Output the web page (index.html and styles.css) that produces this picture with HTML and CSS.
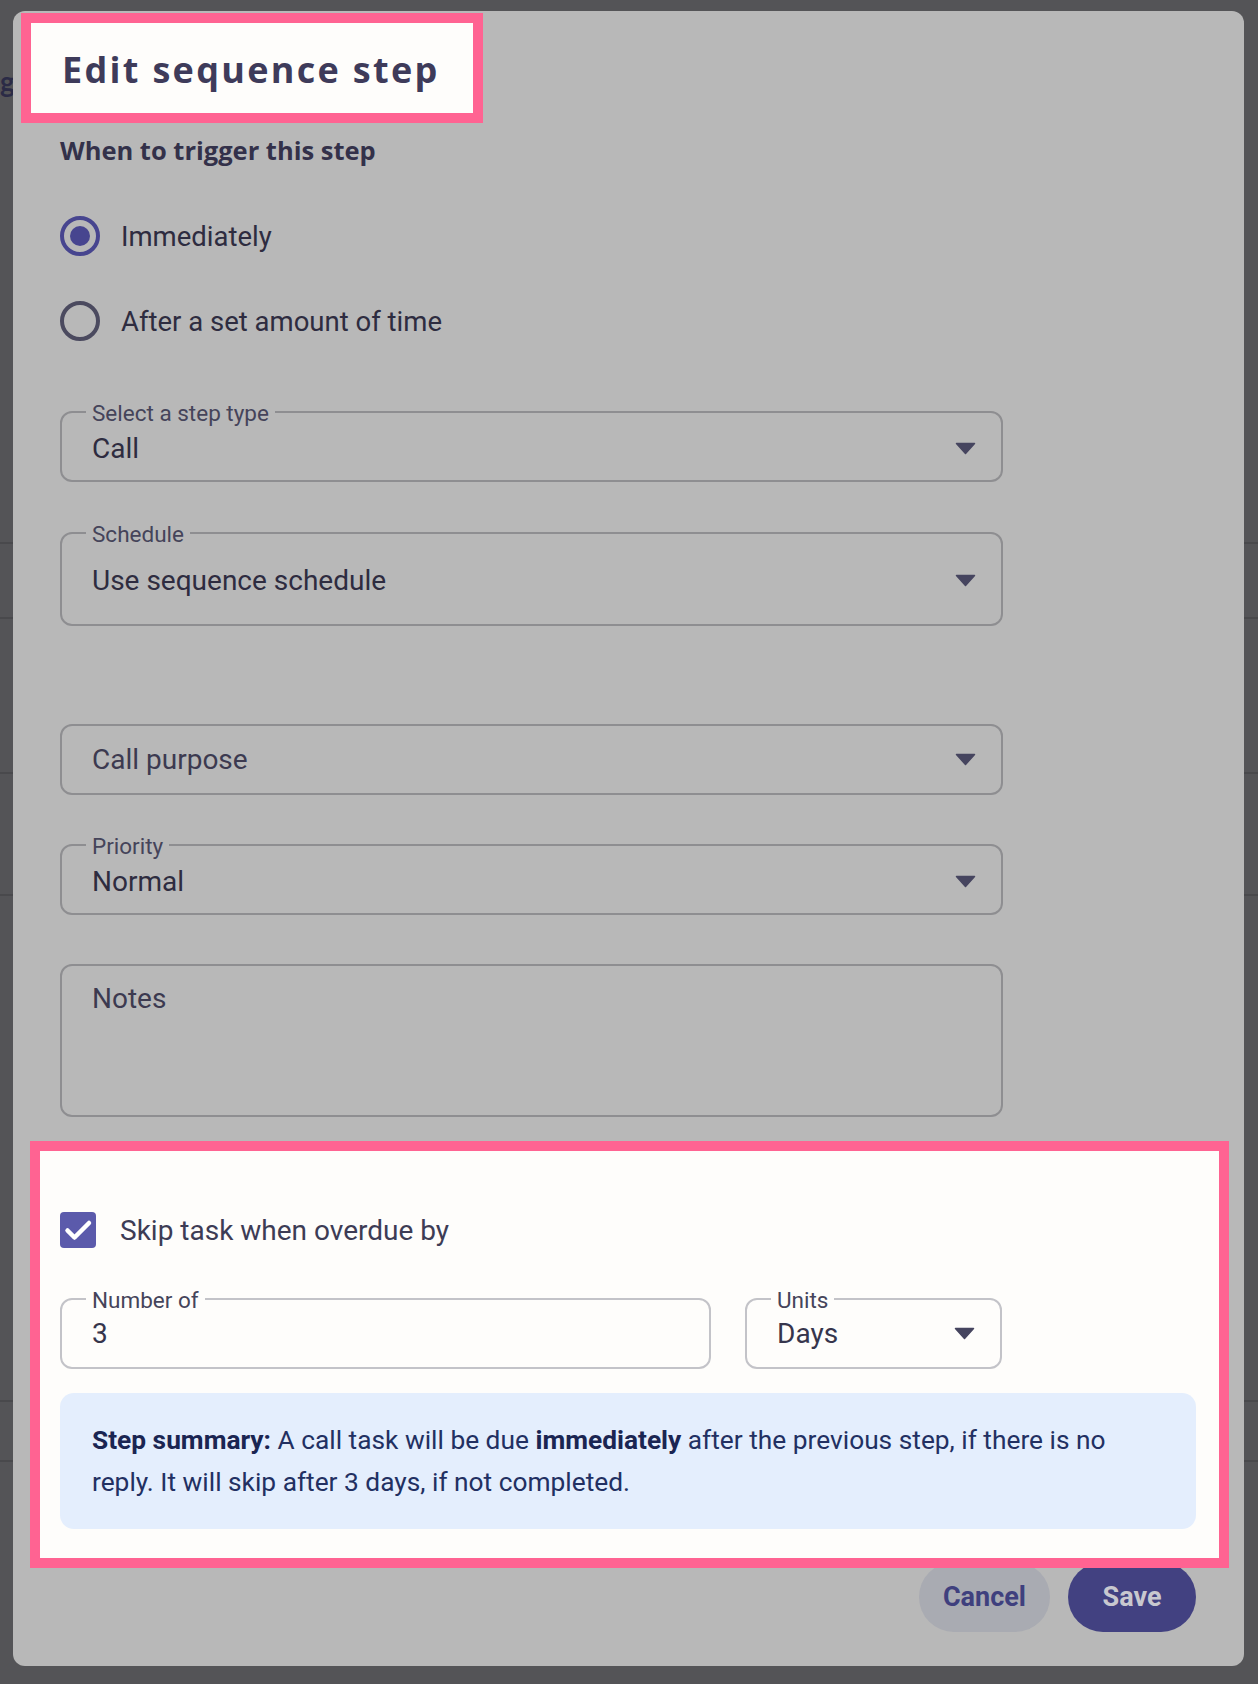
FILE: index.html
```html
<!DOCTYPE html>
<html>
	<head>
		<meta charset="utf-8">
		<title>Edit sequence step</title>
		<link rel="stylesheet" href="styles.css">
	</head>
	<body>
		<div class="page">
			<div class="page-heading">g</div>
			<ul class="page-rows">
				<li class="row-a"></li>
				<li class="row-b"></li>
				<li class="row-c"></li>
				<li class="row-d"></li>
				<li class="row-e"></li>
				<li class="row-f"></li>
			</ul>
		</div>

		<div class="dialog" role="dialog">
			<div class="spotlight spotlight-title">
				<h2 class="dialog-title">Edit sequence step</h2>
			</div>

			<h3 class="section-title">When to trigger this step</h3>

			<div class="radio-group">
				<label class="radio-row"><span class="radio radio-checked"></span>Immediately</label>
				<label class="radio-row"><span class="radio"></span>After a set amount of time</label>
			</div>

			<fieldset class="field field-step">
				<legend>Select a step type</legend>
				<div class="field-value">Call
					<svg class="caret" viewBox="0 0 21 13"><path d="M1.5 1.5 H19.5 L10.5 11.5 Z"/></svg>
				</div>
			</fieldset>

			<fieldset class="field field-schedule">
				<legend>Schedule</legend>
				<div class="field-value field-value-tall">Use sequence schedule
					<svg class="caret" viewBox="0 0 21 13"><path d="M1.5 1.5 H19.5 L10.5 11.5 Z"/></svg>
				</div>
			</fieldset>

			<fieldset class="field field-plain field-purpose">
				<div class="field-value field-value-plain">Call purpose
					<svg class="caret" viewBox="0 0 21 13"><path d="M1.5 1.5 H19.5 L10.5 11.5 Z"/></svg>
				</div>
			</fieldset>

			<fieldset class="field field-priority">
				<legend>Priority</legend>
				<div class="field-value">Normal
					<svg class="caret" viewBox="0 0 21 13"><path d="M1.5 1.5 H19.5 L10.5 11.5 Z"/></svg>
				</div>
			</fieldset>

			<fieldset class="field field-plain field-notes">
				<div class="notes-placeholder">Notes</div>
			</fieldset>

			<div class="spotlight spotlight-skip">
				<label class="check-row">
					<svg class="checkbox" viewBox="0 0 36 36">
						<rect width="36" height="36" rx="4"/>
						<polyline points="7.5,18.5 14.5,25.5 29,11"/>
					</svg>
					Skip task when overdue by
				</label>

				<div class="field-row">
					<fieldset class="field field-light field-number">
						<legend>Number of</legend>
						<div class="field-value">3</div>
					</fieldset>
					<fieldset class="field field-light field-units">
						<legend>Units</legend>
						<div class="field-value">Days
							<svg class="caret" viewBox="0 0 21 13"><path d="M1.5 1.5 H19.5 L10.5 11.5 Z"/></svg>
						</div>
					</fieldset>
				</div>

				<p class="summary"><b>Step summary:</b> A call task will be due <b>immediately</b> after the previous step, if there is no reply. It will skip after 3 days, if not completed.</p>
			</div>

			<div class="dialog-actions">
				<button class="btn btn-cancel">Cancel</button>
				<button class="btn btn-save">Save</button>
			</div>
		</div>
	</body>
</html>
```

FILE: styles.css
```css
* {
	box-sizing: border-box;
}

body {
	margin: 0;
	background: #545457;
	font-family: Roboto, "Liberation Sans", sans-serif;
	color: #2e2c40;
}

/* page behind the modal */
.page-heading {
	padding-top: 65px;
	font: 700 28px/32px Lato, sans-serif;
	color: #2b2b46;
}

.page-rows {
	list-style: none;
	margin: 445px 0 0;
	padding: 0;
}

.page-rows li {
	border-top: 2px solid #49494c;
}

.row-a { height: 75px; }
.row-b { height: 155px; }
.row-c { height: 122px; }
.row-d { height: 506px; }
.row-e { height: 60px; }
.row-f { height: 60px; }

/* modal */
.dialog {
	position: fixed;
	top: 11px;
	left: 13px;
	width: 1231px;
	height: 1655px;
	padding: 2px 48px 33px 47px;
	background: #b8b8b8;
	border-radius: 12px;
}

.spotlight {
	position: relative;
	z-index: 1;
	background: #fefdfb;
	border: 10px solid #ff6392;
}

.spotlight-title {
	width: 462px;
	height: 110px;
	margin-left: -39px;
	padding: 5px 0 0 31px;
}

.dialog-title {
	margin: 0;
	font: 700 36px/84px "Open Sans", sans-serif;
	letter-spacing: 2.3px;
	color: #3e3b5a;
}

.section-title {
	margin: 12px 0 0;
	font: 700 25.5px/30px "Open Sans", sans-serif;
	color: #33314a;
}

.radio-group {
	display: flex;
	flex-direction: column;
	gap: 45px;
	margin-top: 51px;
}

.radio-row {
	display: flex;
	align-items: center;
	gap: 21px;
	height: 40px;
	font-size: 27.5px;
}

.radio {
	display: flex;
	align-items: center;
	justify-content: center;
	width: 40px;
	height: 40px;
	border: 4px solid #4b4a5f;
	border-radius: 50%;
}

.radio-checked {
	border-color: #47458f;
}

.radio-checked::after {
	content: "";
	width: 20px;
	height: 20px;
	border-radius: 50%;
	background: #47458f;
}

/* outlined fields */
.field {
	margin: 0;
	padding: 0 25px 9px 30px;
	border: 2px solid #8e8e91;
	border-radius: 12px;
	min-width: 0;
}

.dialog > .field {
	width: 943px;
}

.field legend {
	margin-left: -6px;
	padding: 2px 6px 0;
	font-size: 22.5px;
	line-height: 24px;
	color: #45445a;
}

.field-value {
	display: flex;
	align-items: center;
	justify-content: space-between;
	height: 46px;
	font-size: 28px;
	color: #2e2c40;
}

.field-value-tall {
	height: 68px;
}

.field-plain {
	padding-bottom: 0;
}

.field-value-plain {
	height: 67px;
	color: #3c3a50;
}

.caret {
	width: 21px;
	height: 13px;
	fill: #46455f;
	stroke: #46455f;
	stroke-width: 1.5;
	stroke-linejoin: round;
}

.field-step { margin-top: 58px; }
.field-schedule { margin-top: 38px; padding-bottom: 10px; }
.field-purpose { margin-top: 98px; }
.field-priority { margin-top: 37px; }

.field-notes {
	margin-top: 49px;
	height: 153px;
	padding-top: 17px;
}

.notes-placeholder {
	font-size: 28px;
	line-height: 32px;
	color: #3c3a50;
}

/* skip task block */
.spotlight-skip {
	margin: 24px -33px 0 -30px;
	padding: 61px 23px 29px 20px;
}

.check-row {
	display: flex;
	align-items: center;
	gap: 24px;
	height: 36px;
	font-size: 28px;
	color: #3d3c55;
}

.checkbox {
	width: 36px;
	height: 36px;
}

.checkbox rect {
	fill: #5b5aab;
}

.checkbox polyline {
	fill: none;
	stroke: #fff;
	stroke-width: 4.5;
	stroke-linecap: round;
	stroke-linejoin: round;
}

.field-row {
	display: flex;
	gap: 34px;
	margin-top: 38px;
}

.field-light {
	border-color: #c3c3c8;
	padding-bottom: 12px;
}

.field-light .field-value {
	height: 43px;
	color: #36354c;
}

.field-number {
	flex: 0 0 651px;
}

.field-units {
	flex: 0 0 257px;
}

.summary {
	margin: 24px 0 0;
	padding: 26px 48px 26px 32px;
	background: #e4eefd;
	border-radius: 14px;
	font-size: 26.3px;
	line-height: 42px;
	color: #223062;
}

.summary b {
	color: #1a2552;
}

/* footer buttons */
.dialog-actions {
	display: flex;
	justify-content: flex-end;
	gap: 18px;
	margin-top: -6px;
}

.btn {
	min-width: 128px;
	height: 70px;
	padding: 0 24px;
	border: none;
	border-radius: 35px;
	font: 700 27px Roboto, sans-serif;
}

.btn-cancel {
	background: #a9abb2;
	color: #3f407e;
}

.btn-save {
	background: #424181;
	color: #c8c8cf;
}
```
